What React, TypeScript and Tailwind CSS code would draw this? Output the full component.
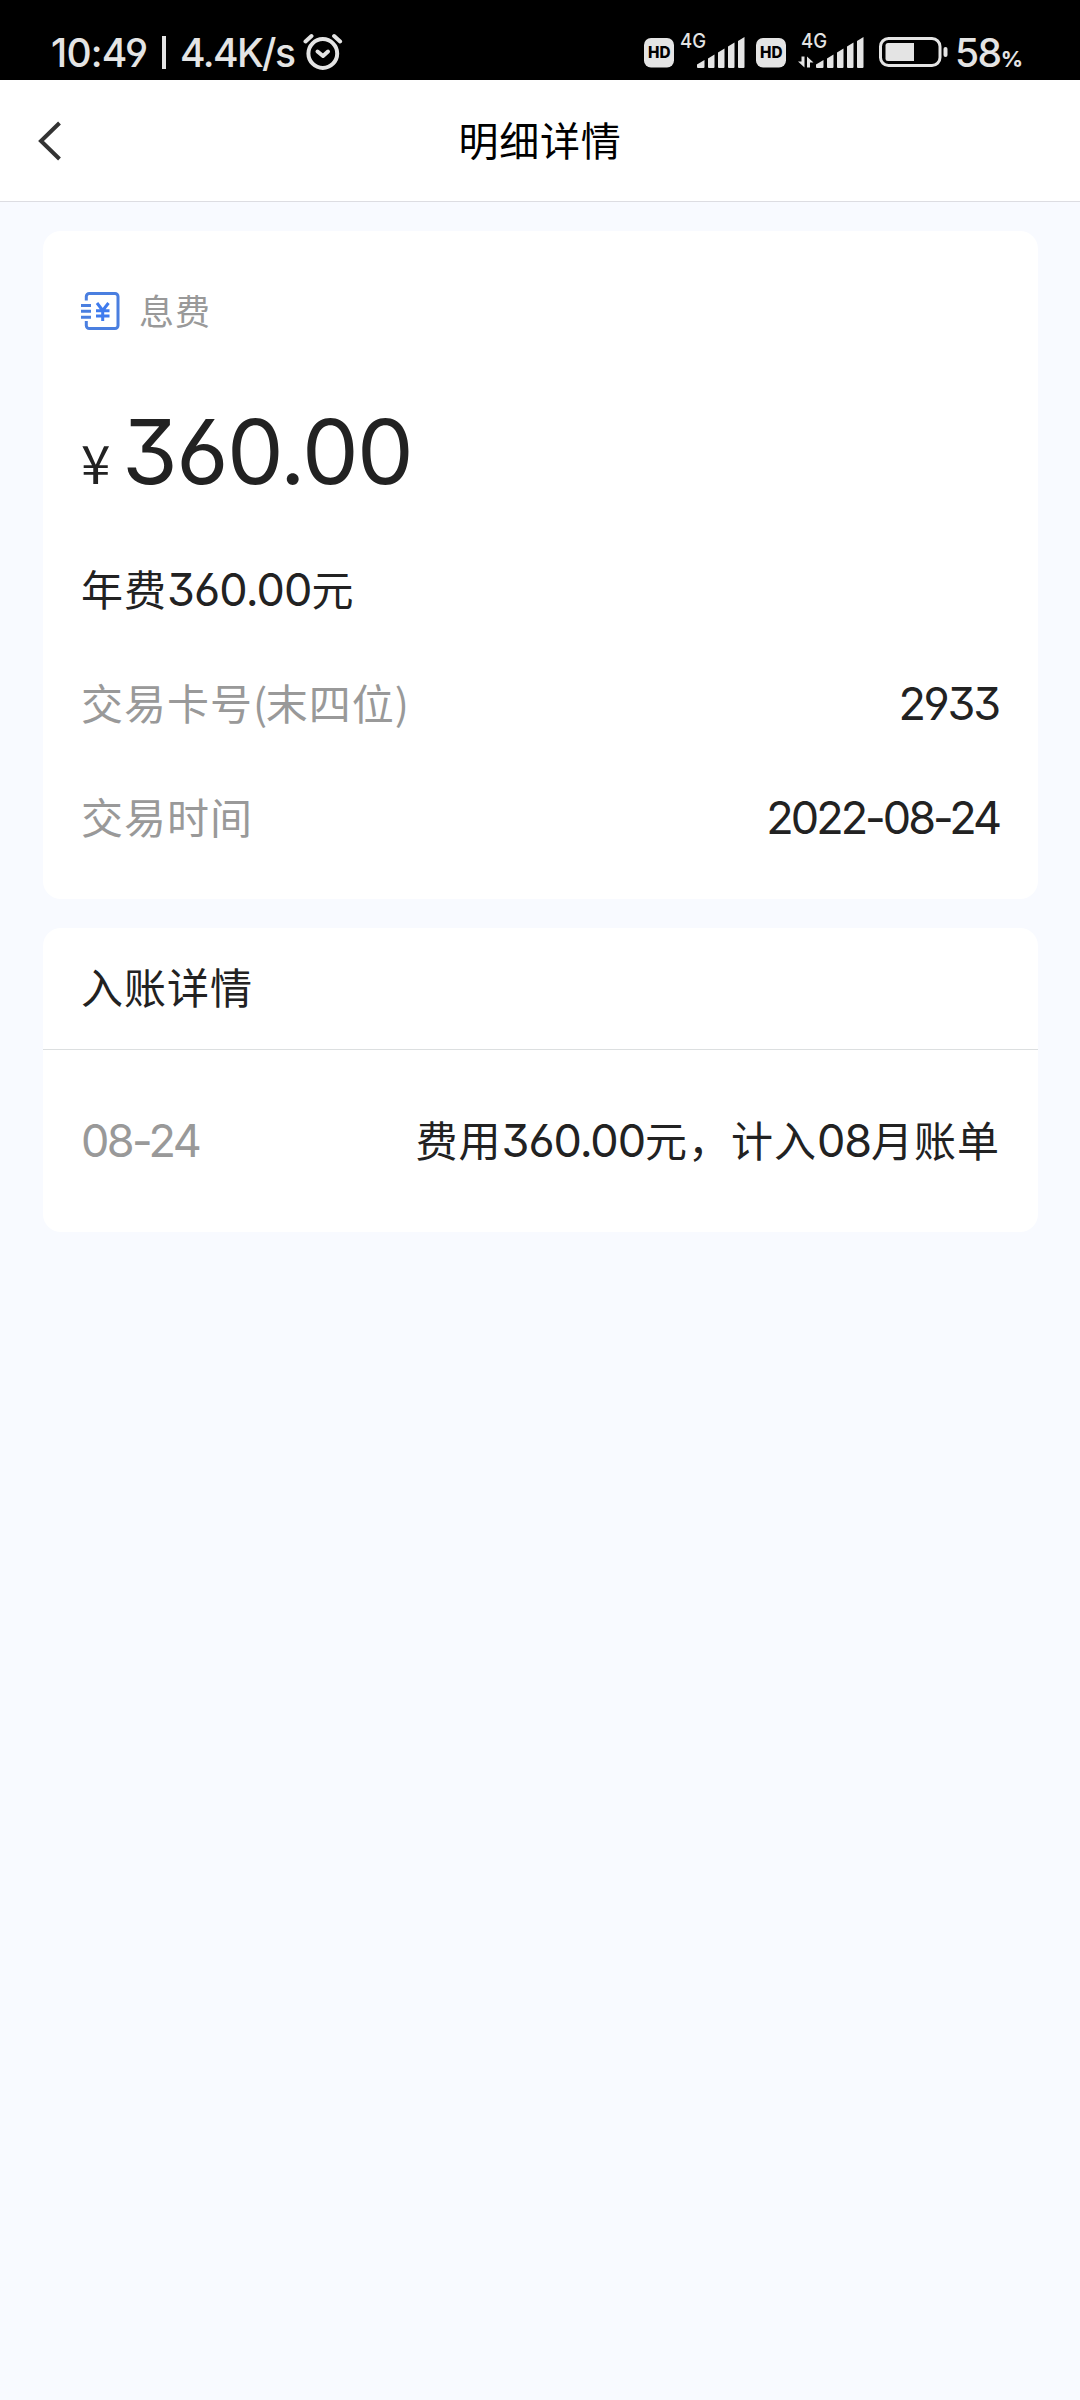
import type { ReactNode } from 'react'

const numFont = "font-['Inter','Noto_Sans_CJK_SC',sans-serif] [font-feature-settings:'cv09','cv03','cv04','calt'_0]"

// Digits sit next to Chinese text but are set in a slightly larger latin face
function Num({ children, className = 'text-[45px] tracking-[-0.9px]' }: { children: ReactNode; className?: string }) {
  return <span className={`${numFont} ${className}`}>{children}</span>
}

function HdBadge() {
  return (
    <svg width="30" height="30" viewBox="0 0 30 30" className="block">
      <rect width="30" height="29.5" rx="7" fill="#e4e4e4" />
      <text x="4" y="20" textLength="22.5" lengthAdjust="spacingAndGlyphs" fontFamily="Inter, sans-serif" fontWeight="800" fontSize="15.5" fill="#000">HD</text>
    </svg>
  )
}

function Signal({ arrows = false }: { arrows?: boolean }) {
  return (
    <svg width="68" height="46" viewBox="0 -8 68 46" className="block" fill="#e4e4e4">
      <text x={arrows ? 4 : 2} y="15" textLength="26" lengthAdjust="spacingAndGlyphs" fontFamily="Inter, sans-serif" fontWeight="500" fontSize="20">4G</text>
      {arrows ? (
        <path d="M4.500 23.500h3v11L1 28.500h3.500zM10 34.500v-11l6.500 6H13v5z" />
      ) : null}
      <path d="M19 31.500 L26.500 27 V34 a1 1 0 0 1 -1 1 H20 a1 1 0 0 1 -1 -1z" />
      <path d="M30 25.500 L36.500 21.500 V34 a1 1 0 0 1 -1 1 H31 a1 1 0 0 1 -1 -1z" />
      <path d="M40 19.500 L46.500 15.500 V34 a1 1 0 0 1 -1 1 H41 a1 1 0 0 1 -1 -1z" />
      <path d="M50 13.500 L56.500 9.500 V34 a1 1 0 0 1 -1 1 H51 a1 1 0 0 1 -1 -1z" />
      <path d="M60 8 L66.500 4 V34 a1 1 0 0 1 -1 1 H61 a1 1 0 0 1 -1 -1z" />
    </svg>
  )
}

function AlarmIcon() {
  return (
    <svg width="40" height="38" viewBox="0 0 40 38" className="block" fill="none" stroke="#e4e4e4" strokeWidth="4" strokeLinecap="round">
      <circle cx="19.800" cy="20.500" r="14.400" />
      <path d="M14.500 18.500l5.500 4.500 5-4.500" strokeLinejoin="round" />
      <path d="M2.500 8.500l6-5.500M37.100 8.500L31.100 3" />
    </svg>
  )
}

function Battery() {
  return (
    <svg width="70" height="31" viewBox="0 0 70 31" className="block">
      <rect x="1.500" y="1.500" width="59.500" height="27" rx="8" fill="none" stroke="#e4e4e4" strokeWidth="3" />
      <path d="M9 6H35V24H9a2.500 2.500 0 0 1-2.500-2.500v-13A2.500 2.500 0 0 1 9 6z" fill="#e4e4e4" />
      <rect x="64.500" y="10" width="4" height="10" rx="2" fill="#e4e4e4" />
    </svg>
  )
}

function FeeIcon() {
  return (
    <svg width="40" height="40" viewBox="0 0 40 40" className="block" fill="none" stroke="#4a7fe0" strokeWidth="3">
      <path d="M5.300 9.500V5.500a3 3 0 0 1 3-3H34a3 3 0 0 1 3 3V34.500a3 3 0 0 1-3 3H8.300a3 3 0 0 1-3-3V30" />
      <path d="M0 14.500h10M0 20.300h10M0 26.200h10" />
      <path d="M16 12l5.700 7.500L27.500 12M21.700 19v11M15 19.700h13.500M15 25h13.500" stroke="#3f7bee" />
    </svg>
  )
}

function StatusBar() {
  return (
    <div className="flex h-20 items-start bg-black text-[#e4e4e4]">
      <div className="ml-[51px] mt-[33px] flex h-10 items-center whitespace-pre">
        <Num className="w-[114px] text-[39px] font-medium leading-[40px] tracking-[-0.8px]">10:49</Num>
        <div className="-mt-0.5 h-[33px] w-1 shrink-0 translate-x-[-3px] bg-[#e4e4e4]" />
        <Num className="ml-[11px] w-[122px] text-[39px] font-medium leading-[40px] tracking-[-1.6px]">4.4K/s</Num>
      </div>
      <div className="ml-px mt-[33px]"><AlarmIcon /></div>
      <div className="ml-auto mr-[57px] flex items-start">
        <div className="mt-[38px]"><HdBadge /></div>
        <div className="ml-[4px] mt-[25px]"><Signal /></div>
        <div className="ml-[10px] mt-[38px]"><HdBadge /></div>
        <div className="ml-[11px] mt-[25px]"><Signal arrows /></div>
        <div className="ml-[14px] mt-[37px]"><Battery /></div>
        <div className="ml-[6px] mt-[33px] flex h-10 w-[68px] items-baseline whitespace-nowrap">
          <Num className="text-[39px] font-medium leading-[40px] tracking-[-1.5px]">58</Num>
          <Num className="text-[22px] font-bold leading-[40px]">%</Num>
        </div>
      </div>
    </div>
  )
}

function Row({ label, children }: { label: ReactNode; children?: ReactNode }) {
  return (
    <div className="flex h-[60px] items-baseline justify-between whitespace-nowrap text-[42px] leading-[60px] tracking-[1px] text-[#222]">
      <span>{label}</span>
      {children}
    </div>
  )
}

export default function App() {
  return (
    <div className="flex h-[2400px] w-[1080px] flex-col overflow-hidden bg-[#f8faff] font-['Noto_Sans_CJK_SC',sans-serif]">
      <StatusBar />

      <header className="grid h-[122px] shrink-0 grid-cols-3 items-center border-b border-[#dddde2] bg-white">
        <svg width="24" height="40" viewBox="0 0 24 40" className="ml-[38px]" fill="none" stroke="#333" strokeWidth="4">
          <path d="M21.500 2L3 20l18.500 18" />
        </svg>
        <h1 className="pb-[4px] text-center text-[40px] leading-[60px] tracking-[0.8px] text-black">明细详情</h1>
      </header>

      <main className="mx-[43px] mt-[29px] flex w-[995px] flex-col gap-[29px]">
        <section className="h-[668px] rounded-[18px] bg-white px-[38px] pt-[50px]">
          <div className="flex h-[60px] items-center gap-[18px] text-[35px] tracking-[1px] text-[#999]">
            <FeeIcon />
            <span className="pb-[2px]">息费</span>
          </div>
          <div className="mt-[61px] flex h-[100px] items-baseline text-[#222]">
            <span className="w-[41px] text-[53px] leading-[100px]">¥</span>
            <Num className="text-[90px] leading-[100px] tracking-[-1.6px]">360.00</Num>
          </div>
          <div className="mt-[56px] flex flex-col gap-[54px]">
            <Row label={<>年费<Num>360.00</Num>元</>} />
            <Row label={<span className="text-[#999]">交易卡号<span className="tracking-[-1.5px]">(</span>末四位)</span>}>
              <Num className="mr-px text-[45px] tracking-[-2.2px]">2933</Num>
            </Row>
            <Row label={<span className="text-[#999]">交易时间</span>}>
              <Num className="mr-px text-[45px] tracking-[-3px]">2022-08-24</Num>
            </Row>
          </div>
        </section>

        <section className="h-[304px] rounded-[18px] bg-white">
          <div className="h-[122px] border-b border-[#dcdfe0] px-[38px] pt-[28px]">
            <Row label="入账详情" />
          </div>
          <div className="px-[38px] pt-[59px]">
            <Row label={<Num className="text-[45px] tracking-[-2.6px] text-[#999]">08-24</Num>}>
              <span>费用<Num className="text-[45px] tracking-[-1.1px]">360.00</Num>元，计入<Num className="text-[45px] tracking-[-1.1px]">08</Num>月账单</span>
            </Row>
          </div>
        </section>
      </main>
    </div>
  )
}
